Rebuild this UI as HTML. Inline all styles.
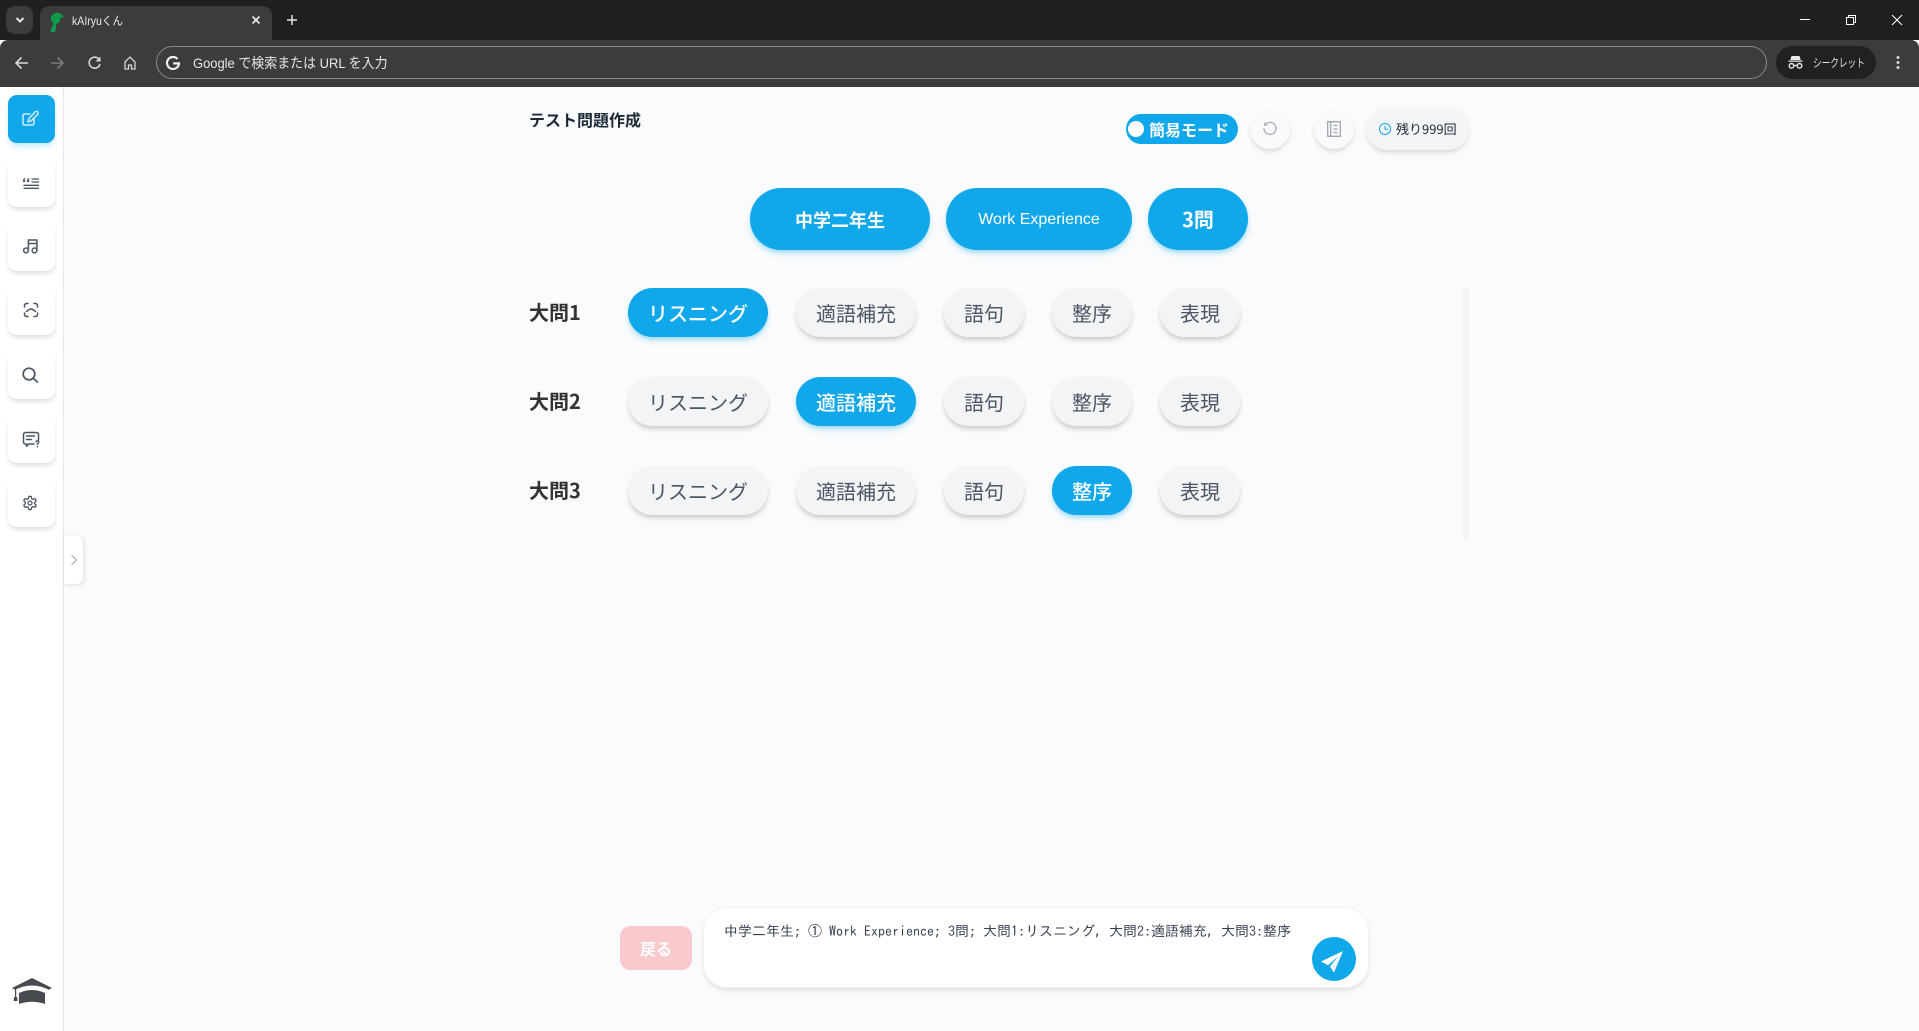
<!DOCTYPE html>
<html lang="ja"><head><meta charset="utf-8"><title>kAIryuくん</title>
<style>
*{box-sizing:border-box;margin:0;padding:0}
html,body{width:1919px;height:1031px;overflow:hidden;background:#f9fbfd;font-family:"Liberation Sans","Noto Sans CJK JP",sans-serif}
.a{position:absolute}
svg{position:absolute;display:block;overflow:visible}
#top{left:0;top:0;width:1919px;height:40px;background:#1f2120}
#bar{left:0;top:40px;width:1919px;height:47px;background:#3c3c3c;border-radius:8px 8px 0 0}
#tab{left:40px;top:6px;width:232px;height:36px;background:#3c3c3c;border-radius:10px 10px 0 0}
#side{left:0;top:87px;width:64px;height:944px;background:#fff;border-right:1px solid #e5e7eb}
.sb{position:absolute;left:8px;width:47px;height:48px;border-radius:9px;background:#fff;box-shadow:0 4px 6px -1px rgba(0,0,0,.1),0 2px 4px -1px rgba(0,0,0,.06)}
.sb svg{left:0;top:0}
.p{position:absolute;display:flex;align-items:center;justify-content:center;border-radius:999px;background:#f3f4f6;color:#4b5563;font-size:20px;line-height:1;height:49px;box-shadow:0 4px 6px -1px rgba(0,0,0,.16),0 2px 4px -1px rgba(0,0,0,.08);font-family:"Noto Sans CJK JP",sans-serif;white-space:nowrap}
.on{color:#fff;font-weight:500;background:#10a7eb;box-shadow:0 4px 6px -1px rgba(14,165,233,.3),0 2px 4px -1px rgba(14,165,233,.18)}
.big{height:62px;top:188px;font-weight:700;font-size:18px;padding-top:2px}
.lbl{position:absolute;left:529px;font-weight:700;font-size:20px;line-height:1;color:#333;font-family:"Noto Sans CJK JP",sans-serif;white-space:nowrap}
.c{position:absolute;width:40px;height:40px;top:109px;border-radius:50%;background:#f9fafb;box-shadow:0 4px 6px -1px rgba(0,0,0,.1),0 2px 4px -1px rgba(0,0,0,.06)}
.c svg{left:13px;top:12px}
</style></head><body>
<div class="a" id="top"></div>
<div class="a" id="bar"></div>
<div class="a" style="left:6px;top:6px;width:27px;height:28px;background:#3c3c3c;border-radius:9px"></div>
<svg style="left:11px;top:15px" width="18" height="12" viewBox="0 0 18 12" fill="none" stroke="#e4e4e4" stroke-width="2"><path d="M5.5 3l3.5 3.5L12.5 3"/></svg>
<div class="a" id="tab"></div>
<svg style="left:48px;top:12px" width="18" height="20" viewBox="0 0 18 20"><path d="M3 20c-1-3 1-6 3-8C4 10 2 8 3 5c1-3 5-5 8-4 2 .5 4 2 5 5-2-1-3-1-4 0 1 3-1 5-3 6-1 .8-1 2-1 3 0 2-1 4-1 5z" fill="#0f9b4b"/></svg>
<div class="a" style="left:72px;top:13px;font-size:12px;line-height:16px;color:#e8e8e8;white-space:nowrap;transform:scaleX(.88);transform-origin:0 50%">kAIryuくん</div>
<svg style="left:250px;top:14px" width="12" height="12" viewBox="0 0 12 12" stroke="#e8e8e8" stroke-width="1.7"><path d="M2.5 2.5l7 7M9.5 2.5l-7 7"/></svg>
<svg style="left:286px;top:14px" width="12" height="12" viewBox="0 0 12 12" stroke="#e4e4e4" stroke-width="1.5"><path d="M6 1v10M1 6h10"/></svg>
<svg style="left:1800px;top:15px" width="102" height="10" viewBox="0 0 102 10" fill="none" stroke="#fff" stroke-width="1"><path d="M0 4.500h10"/><path d="M46.500 2.500h7v7h-7z"/><path d="M48.500 2.500V.5h7v7h-2"/><path d="M92 0l10 10M102 0L92 10"/></svg>
<svg style="left:14px;top:55px" width="132" height="16" viewBox="0 0 132 16" fill="none" stroke="#d8d8d8" stroke-width="1.600"><path d="M14 8H2M7.500 2.500L2 8l5.500 5.500"/><path stroke="#7d7d7d" d="M37 8h12M43.500 2.500L49 8l-5.500 5.500"/><path d="M85.500 5a5.500 5.500 0 1 0 .5 4"/><path fill="#d8d8d8" stroke="none" d="M86.500 1.500v5h-5z"/><path stroke-width="1.300" d="M111 7l5-5 5 5v7h-3.500v-4h-3v4H111z"/></svg>
<div class="a" style="left:156px;top:46px;width:1611px;height:33px;border:1px solid #8a8a8a;border-radius:17px;background:#3c3c3c"></div>
<svg style="left:166px;top:56px" width="14" height="14" viewBox="0 0 14 14" fill="none" stroke="#f2f2f2" stroke-width="2.200"><path d="M11.500 3A6 6 0 1 0 13 7.400H7.200"/></svg>
<div class="a" style="left:193px;top:53px;font-size:14px;line-height:20px;color:#e8e8e8;white-space:nowrap;transform:scaleX(.925);transform-origin:0 50%">Google で検索または URL を入力</div>
<div class="a" style="left:1776px;top:46px;width:100px;height:33px;border-radius:17px;background:#202221"></div>
<svg style="left:1788px;top:55px" width="15" height="14" viewBox="0 0 15 14" fill="none" stroke="#e8e8e8" stroke-width="1.400"><path fill="#e8e8e8" stroke="none" d="M3.500 1h8l1.200 4H2.300zM0.500 5.500h14v1.300H.5z"/><circle cx="3.500" cy="10.800" r="2.300"/><circle cx="11.500" cy="10.800" r="2.300"/><path d="M5.800 10.500h3.400"/></svg>
<div class="a" style="left:1813px;top:55px;font-size:12px;line-height:16px;color:#e0e0e0;white-space:nowrap;transform:scaleX(.72);transform-origin:0 50%">シークレット</div>
<svg style="left:1896px;top:55px" width="4" height="15" viewBox="0 0 4 15" fill="#d8d8d8"><circle cx="2" cy="2.500" r="1.500"/><circle cx="2" cy="7.500" r="1.500"/><circle cx="2" cy="12.500" r="1.500"/></svg>

<div class="a" id="side"></div>
<div class="sb" style="top:95px;background:#10a7eb;box-shadow:0 4px 6px -1px rgba(14,165,233,.25)"><svg style="left:-1px;top:-1px" width="47" height="48" viewBox="0 0 47 48" fill="none" stroke="#fff" stroke-opacity=".8" stroke-width="1.500" stroke-linecap="round" stroke-linejoin="round"><path d="M23 20h-5.500a1.500 1.500 0 0 0-1.500 1.500v8a1.500 1.500 0 0 0 1.500 1.500h8a1.500 1.500 0 0 0 1.500-1.500V25"/><path d="M28 18a1.600 1.600 0 0 1 2.800 2.200L24 27l-3 .8.800-3z"/></svg></div>
<div class="sb" style="top:159px"><svg width="47" height="48" viewBox="0 0 47 48" fill="none" stroke="#4b5563" stroke-width="1.300"><path d="M23.500 20h7.500M23.500 23h7.500M15.500 26.300h15.500M15.500 29.300h15.500"/><path fill="#4b5563" stroke="none" d="M15 21.500c0-1.300.8-2.300 2.200-2.500v1c-.5.100-.8.400-.8.800h.8v2.200H15zM19 21.500c0-1.300.8-2.300 2.200-2.500v1c-.5.100-.8.400-.8.800h.8v2.200H19z"/></svg></div>
<div class="sb" style="top:223px"><svg style="top:-1px" width="47" height="48" viewBox="0 0 47 48" fill="none" stroke="#4b5563" stroke-width="1.500"><circle cx="18" cy="28.400" r="2.400"/><circle cx="26.500" cy="28.400" r="2.400"/><path d="M20.400 28V18h8.500v10.400M20.400 21.500h8.500"/></svg></div>
<div class="sb" style="top:287px"><svg style="top:-1px" width="47" height="48" viewBox="0 0 47 48" fill="none" stroke="#4b5563" stroke-width="1.500" stroke-linecap="round"><path d="M16.500 21v-1.500a2 2 0 0 1 2-2H20M26 17.500h1.500a2 2 0 0 1 2 2V21M29.500 27v1.500a2 2 0 0 1-2 2H26M20 30.500h-1.500a2 2 0 0 1-2-2V27"/><path d="M18.500 25.500c1.500-.8 2.300-2.500 4.500-2.500s3 1.700 4.500 2.500"/></svg></div>
<div class="sb" style="top:351px"><svg style="left:-1px;top:-1px" width="47" height="48" viewBox="0 0 47 48" fill="none" stroke="#4b5563" stroke-width="1.700" stroke-linecap="round"><circle cx="22" cy="24" r="5.800"/><path d="M26.300 28.300l4.200 3.700"/></svg></div>
<div class="sb" style="top:415px"><svg width="47" height="48" viewBox="0 0 47 48" fill="none" stroke="#4b5563" stroke-width="1.500" stroke-linecap="round" stroke-linejoin="round"><path d="M26 29h-5l-2.500 2.200V29h-1a2 2 0 0 1-2-2v-7.500a2 2 0 0 1 2-2h11a2 2 0 0 1 2 2V25"/><path d="M18.500 21h8M18.500 24.500h5"/><path stroke-width="1.400" d="M28 27a1.400 1.400 0 1 1 2 1.400c-.6.300-.7.700-.7 1.100M29.300 31.600v.2"/></svg></div>
<div class="sb" style="top:479px"><svg style="left:14px;top:16px" width="16" height="16" viewBox="0 0 24 24" fill="none" stroke="#4b5563" stroke-width="2" stroke-linecap="round" stroke-linejoin="round"><path d="M12.220 2h-.44a2 2 0 0 0-2 2v.18a2 2 0 0 1-1 1.730l-.43.250a2 2 0 0 1-2 0l-.15-.08a2 2 0 0 0-2.730.730l-.22.380a2 2 0 0 0 .730 2.730l.15.100a2 2 0 0 1 1 1.720v.510a2 2 0 0 1-1 1.740l-.15.090a2 2 0 0 0-.730 2.730l.22.380a2 2 0 0 0 2.730.730l.15-.08a2 2 0 0 1 2 0l.43.250a2 2 0 0 1 1 1.730V20a2 2 0 0 0 2 2h.44a2 2 0 0 0 2-2v-.18a2 2 0 0 1 1-1.730l.43-.25a2 2 0 0 1 2 0l.15.08a2 2 0 0 0 2.730-.73l.22-.39a2 2 0 0 0-.73-2.730l-.15-.08a2 2 0 0 1-1-1.740v-.5a2 2 0 0 1 1-1.740l.15-.09a2 2 0 0 0 .73-2.730l-.22-.38a2 2 0 0 0-2.730-.73l-.15.08a2 2 0 0 1-2 0l-.43-.25a2 2 0 0 1-1-1.730V4a2 2 0 0 0-2-2z"/><circle cx="12" cy="12" r="3"/></svg></div>
<div class="a" style="left:64px;top:536px;width:19px;height:48px;background:#fff;border-radius:0 6px 6px 0;box-shadow:1px 1px 4px rgba(0,0,0,.12)"></div>
<svg style="left:70px;top:554px" width="8" height="12" viewBox="0 0 8 12" fill="none" stroke="#b4b8c0" stroke-width="1.300"><path d="M1.500 1l5 5-5 5"/></svg>
<svg style="left:12px;top:977px" width="40" height="30" viewBox="0 0 40 30" fill="#474a4f"><path d="M20 1l20 10-3 1.800C26 7 14 7 3 12.800L0 11z"/><path d="M7 16c8-4 18-4 26 0v11c-8-3-18-3-26 0z"/><path d="M3 12h1.200v9H3z"/><path d="M2 20h3.200l.3 4h-3.800z"/></svg>

<div class="a" style="left:529px;top:109px;font-size:16px;font-weight:700;line-height:20px;color:#1f2937;white-space:nowrap;font-family:'Noto Sans CJK JP',sans-serif">テスト問題作成</div>

<div class="a" style="left:1126px;top:114px;width:112px;height:30px;border-radius:15px;background:#10a7eb"></div>
<div class="a" style="left:1128px;top:121px;width:16px;height:16px;border-radius:50%;background:#fff"></div>
<div class="a" style="left:1149px;top:119px;font-size:16px;font-weight:700;line-height:20px;color:#fff;white-space:nowrap;font-family:'Noto Sans CJK JP',sans-serif">簡易モード</div>
<div class="c" style="left:1250px"><svg width="14" height="14" viewBox="0 0 14 14" fill="none" stroke="#a8adb6" stroke-width="1.300"><path d="M2.700 3.200A6 6 0 1 1 1 7"/><path fill="#a8adb6" stroke="none" d="M1 1l.3 4 3.700-.7z"/></svg></div>
<div class="c" style="left:1314px"><svg width="14" height="16" viewBox="0 0 14 16" fill="none" stroke="#a0a5ae" stroke-width="1.300"><path d="M.7.700h12.600v14.600H.7zM3.700.7v14.600M6.500 4.500h4M6.500 8h4M6.500 11.500h4"/></svg></div>
<div class="a" style="left:1366px;top:107px;width:103px;height:43px;border-radius:22px;background:#f3f5f6;box-shadow:0 4px 6px -1px rgba(0,0,0,.1),0 2px 4px -1px rgba(0,0,0,.06)"></div>
<svg style="left:1379px;top:123px" width="12" height="12" viewBox="0 0 12 12" fill="none" stroke="#10a7eb" stroke-width="1"><circle cx="6" cy="6" r="5.500"/><path d="M6 2.800V6.300h3"/></svg>
<div class="a" style="left:1396px;top:120px;font-size:13px;line-height:18px;color:#1f2937;white-space:nowrap;font-family:'Noto Sans CJK JP',sans-serif">残り999回</div>

<div class="p on big" style="left:750px;width:180px">中学二年生</div>
<div class="p on big" style="left:946px;width:186px;font-weight:400;font-size:16px;font-family:'Liberation Sans',sans-serif">Work Experience</div>
<div class="p on big" style="left:1148px;width:100px;font-size:20px;padding-top:0">3問</div>

<div class="lbl" style="top:302px">大問1</div>
<div class="p on" style="left:628px;top:288px;width:140px">リスニング</div>
<div class="p" style="left:796px;top:288px;width:120px">適語補充</div>
<div class="p" style="left:944px;top:288px;width:80px">語句</div>
<div class="p" style="left:1052px;top:288px;width:80px">整序</div>
<div class="p" style="left:1160px;top:288px;width:80px">表現</div>

<div class="lbl" style="top:391px">大問2</div>
<div class="p" style="left:628px;top:377px;width:140px">リスニング</div>
<div class="p on" style="left:796px;top:377px;width:120px">適語補充</div>
<div class="p" style="left:944px;top:377px;width:80px">語句</div>
<div class="p" style="left:1052px;top:377px;width:80px">整序</div>
<div class="p" style="left:1160px;top:377px;width:80px">表現</div>

<div class="lbl" style="top:480px">大問3</div>
<div class="p" style="left:628px;top:466px;width:140px">リスニング</div>
<div class="p" style="left:796px;top:466px;width:120px">適語補充</div>
<div class="p" style="left:944px;top:466px;width:80px">語句</div>
<div class="p on" style="left:1052px;top:466px;width:80px">整序</div>
<div class="p" style="left:1160px;top:466px;width:80px">表現</div>

<div class="a" style="left:1463px;top:288px;width:6px;height:251px;background:#f3f4f6"></div>

<div class="a" style="left:620px;top:926px;width:72px;height:44px;border-radius:10px;background:#f8c9cd;color:#fff;font-weight:700;font-size:16px;display:flex;align-items:center;justify-content:center;font-family:'Noto Sans CJK JP',sans-serif">戻る</div>
<div class="a" style="left:703px;top:907px;width:666px;height:81px;border-radius:24px;background:#fff;border:1px solid #f0f1f3;box-shadow:0 4px 6px -1px rgba(0,0,0,.08),0 2px 4px -1px rgba(0,0,0,.04)"></div>
<div class="a" style="left:724px;top:921px;font-size:14px;line-height:20px;color:#374151;white-space:pre;font-family:IPAGothic,monospace">中学二年生; ① Work Experience; 3問; 大問1:リスニング, 大問2:適語補充, 大問3:整序</div>
<div class="a" style="left:1312px;top:937px;width:44px;height:44px;border-radius:50%;background:#10a7eb"></div>
<svg style="left:1320px;top:950px" width="24" height="23" viewBox="0 0 24 23" fill="#fff"><path d="M23 1L1 11.500l7 3.700L18.500 6 10 16.500l4 6z"/></svg>
</body></html>
